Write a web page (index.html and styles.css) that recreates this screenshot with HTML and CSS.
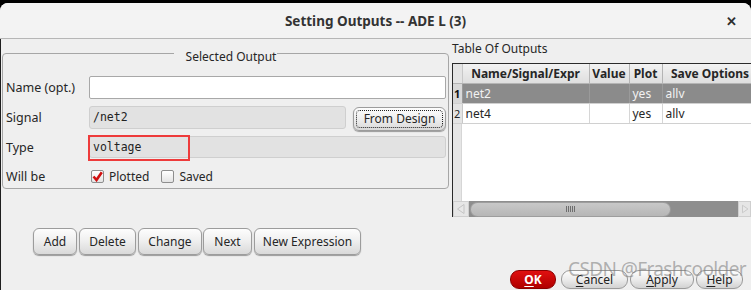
FILE: index.html
```html
<!DOCTYPE html>
<html>
<head>
<meta charset="utf-8">
<link rel="stylesheet" href="styles.css">
</head>
<body>
<div class="win">
  <div class="titlebar">
    <span class="title">Setting Outputs -- ADE L (3)</span>
    <span class="close">✕</span>
  </div>
  <div class="body">
    <div class="top">
      <fieldset class="group">
        <legend>Selected Output</legend>
        <div class="row r1"><span class="lbl">Name (opt.)</span><div class="input"></div></div>
        <div class="row r2"><span class="lbl">Signal</span><div class="ro sig">/net2</div><div class="btn fromdesign"><span class="focus">From Design</span></div></div>
        <div class="row r3"><span class="lbl">Type</span><div class="ro type">voltage<span class="hl"></span></div></div>
        <div class="row r4"><span class="lbl">Will be</span>
          <span class="cb checked"><svg width="11" height="11" viewBox="0 0 11 11"><path d="M1.5 5.5 L4.5 9 L9.8 1.2" fill="none" stroke="#d01010" stroke-width="2.6"/></svg></span><span class="cbl">Plotted</span>
          <span class="cb"></span><span class="cbl">Saved</span>
        </div>
      </fieldset>
      <div class="tablesec">
        <div class="tlabel">Table Of Outputs</div>
        <div class="tframe">
          <table class="tbl">
            <colgroup><col class="c0"><col class="c1"><col class="c2"><col class="c3"><col class="c4"></colgroup>
            <thead><tr><th class="rn"></th><th>Name/Signal/Expr</th><th>Value</th><th>Plot</th><th>Save Options</th></tr></thead>
            <tbody>
              <tr class="sel"><td class="rn b">1</td><td>net2</td><td></td><td>yes</td><td>allv</td></tr>
              <tr><td class="rn">2</td><td>net4</td><td></td><td>yes</td><td>allv</td></tr>
            </tbody>
          </table>
          <div class="filler"><div class="fgut"></div><div class="fwhite"></div></div>
          <div class="hscroll">
            <div class="arr"><svg width="12" height="12" viewBox="0 0 12 12"><path d="M9 1.5 L2.5 6 L9 10.5 Z" fill="#e8e8e8" stroke="#c4c4c4"/></svg></div>
            <div class="track"><div class="handle"><span class="grip"></span></div></div>
            <div class="arr r"><svg width="12" height="12" viewBox="0 0 12 12"><path d="M3 1.5 L9.5 6 L3 10.5 Z" fill="#e8e8e8" stroke="#c4c4c4"/></svg></div>
          </div>
        </div>
      </div>
    </div>
    <div class="actions">
      <div class="btn b-add">Add</div>
      <div class="btn b-del">Delete</div>
      <div class="btn b-chg">Change</div>
      <div class="btn b-next">Next</div>
      <div class="btn b-new">New Expression</div>
    </div>
    <div class="dlg">
      <div class="dbtn ok"><u>O</u>K</div>
      <div class="dbtn cancel"><u>C</u>ancel</div>
      <div class="dbtn apply"><u>A</u>pply</div>
      <div class="dbtn help"><u>H</u>elp</div>
      <div class="wm">CSDN @Frashcoolder</div>
    </div>
  </div>
</div>
</body>
</html>
```

FILE: styles.css
```css
* { box-sizing: border-box; }
html, body { margin: 0; padding: 0; }
body {
  background: #000;
  width: 751px;
  height: 290px;
  overflow: hidden;
  font-family: "Noto Sans", "Open Sans", sans-serif;
  font-size: 12px;
  color: #262626;
}
.win {
  margin-top: 3px;
  height: 287px;
  background: #efefef;
  border-radius: 8px 8px 0 0;
  overflow: hidden;
}
.titlebar {
  height: 36px;
  background: #f3f3f3;
  border-bottom: 1px solid #b6b6b6;
  display: flex;
  align-items: center;
  justify-content: center;
  position: relative;
}
.title {
  font-weight: 700;
  font-size: 13.5px;
  color: #333;
}
.close {
  position: absolute;
  right: 14px;
  top: 9px;
  font-size: 13px;
  font-weight: 700;
  color: #2e2e2e;
}
.body {
  border-left: 1px solid #1e1e1e;
  height: 251px;
  display: flex;
  flex-direction: column;
}
.top {
  display: flex;
  height: 178px;
}
.group {
  flex: none;
  margin: 2px 0 0 1px;
  padding: 0;
  width: 447px;
  height: 148px;
  border: 1px solid #a6a6a6;
  border-radius: 4px;
  min-width: 0;
}
.group legend {
  margin: 0 auto;
  padding: 8px 6px 0 7px;
  line-height: 16px;
  color: #262626;
  position: relative;
  left: 5px;
}
.row {
  display: flex;
  align-items: center;
  height: 30px;
  padding-left: 3px;
}
.r1 { margin-top: 7px; }
.r4 { height: 28px; }
.lbl {
  width: 83px;
  flex: none;
  font-size: 12.5px;
}
.input {
  width: 357px;
  height: 23px;
  background: #fff;
  border: 1px solid #a8a8a8;
  border-radius: 2px;
}
.ro {
  height: 23px;
  background: #e2e2e2;
  border: 1px solid #cfcfcf;
  border-radius: 3px;
  font-family: "DejaVu Sans Mono", monospace;
  font-size: 11.5px;
  line-height: 21px;
  padding-left: 3px;
  color: #222;
}
.sig { width: 257px; }
.type { width: 357px; height: 22px; line-height: 20px; position: relative; }
.hl {
  position: absolute;
  left: -2px;
  top: -2px;
  width: 102px;
  height: 26px;
  border: 2px solid #ee3b3b;
}
.btn {
  height: 27px;
  border: 1px solid #9c9c9c;
  border-radius: 6px;
  background: linear-gradient(#fdfdfd, #f0f0f0 45%, #d9d9d9);
  box-shadow: 0 1px 1px #9a9a9a;
  display: flex;
  align-items: center;
  justify-content: center;
  padding: 0;
  color: #262626;
  flex: none;
}
.fromdesign {
  margin-left: 7px;
  width: 93px;
  height: 24px;
  padding: 2px;
  margin-top: 3px;
}
.focus {
  border: 1px dotted #222;
  border-radius: 4px;
  width: 100%;
  height: 100%;
  display: flex;
  align-items: center;
  justify-content: center;
}
.cb {
  width: 13px;
  height: 13px;
  border: 1px solid #8e8e8e;
  border-radius: 2px;
  background: linear-gradient(#fff, #e4e4e4);
  margin-left: 2px;
  display: flex;
  align-items: center;
  justify-content: center;
  flex: none;
}
.cbl { margin-left: 5px; margin-right: 10px; }
.tablesec {
  flex: 1;
  min-width: 0;
  display: flex;
  flex-direction: column;
  padding-top: 2px;
}
.tlabel {
  padding-left: 2px;
  line-height: 16px;
  height: 16px;
  margin-left: 1px;
}
.tframe {
  margin-top: 6px;
  margin-left: 3px;
  flex: 1;
  overflow: hidden;
  border-left: 1px solid #2a2a2a;
  border-top: 1px solid #2a2a2a;
  display: flex;
  flex-direction: column;
  background: #fff;
}
.tbl {
  border-collapse: collapse;
  table-layout: fixed;
  width: 305px;
  flex: none;
}
.c0 { width: 9px; }
.c1 { width: 127px; }
.c2 { width: 40px; }
.c3 { width: 33px; }
.c4 { width: 96px; }
.tbl th {
  height: 19px;
  background: linear-gradient(#f2f2f2, #dedede);
  border-right: 1px solid #b4b4b4;
  border-bottom: 1px solid #b4b4b4;
  font-weight: 700;
  padding: 0;
  white-space: nowrap;
  overflow: hidden;
  color: #262626;
}
.tbl td {
  height: 20px;
  padding: 0 0 0 3px;
  border-right: 1px solid #d6d6d6;
  border-bottom: 1px solid #d0d0d0;
  white-space: nowrap;
  overflow: hidden;
}
.tbl td.rn, .tbl th.rn {
  padding: 0;
  background: #e4e4e4;
  border-right: 1px solid #c8c8c8;
  text-align: center;
  font-size: 11px;
}
.tbl td.rn.b { font-weight: 700; }
.tbl tr.sel td { background: #8b8b8b; color: #f2f2f2; border-right-color: #9a9a9a; }
.tbl tr.sel td.rn { background: #d8d8d8; color: #111; }
.filler { flex: 1; display: flex; }
.fgut { width: 9px; background: #e6e6e6; border-right: 1px solid #d6d6d6; }
.fwhite { flex: 1; background: #fff; }
.hscroll {
  height: 16px;
  display: flex;
  background: #8e8e8e;
}
.arr {
  width: 16px;
  flex: none;
  background: #e6e6e6;
  border: 1px solid #cfcfcf;
  display: flex;
  align-items: center;
  justify-content: center;
}
.arr.r { width: 13px; justify-content: flex-start; padding-left: 1px; }
.track {
  flex: 1;
  display: flex;
  align-items: center;
  padding-left: 1px;
}
.handle {
  width: 201px;
  height: 15px;
  border-radius: 8px;
  background: linear-gradient(#c8c8c8, #b6b6b6);
  border: 1px solid #9d9d9d;
  display: flex;
  align-items: center;
  justify-content: center;
}
.grip {
  width: 9px;
  height: 6px;
  background: repeating-linear-gradient(90deg, #6e6e6e 0 1px, transparent 1px 2px);
}
.actions {
  display: flex;
  gap: 2px;
  padding-left: 32px;
  margin-top: 11px;
}
.b-add { width: 44px; }
.b-del { width: 57px; }
.b-chg { width: 64px; }
.b-next { width: 49px; margin-left: -1px; }
.b-new { width: 107px; }
.dlg {
  position: relative;
  display: flex;
  justify-content: flex-end;
  gap: 2px;
  padding-right: 8px;
  margin-top: 15px;
}
.dbtn {
  height: 19px;
  border-radius: 9px;
  border: 1px solid #9a9a9a;
  background: linear-gradient(#fdfdfd, #ececec 50%, #d2d2d2);
  display: flex;
  align-items: center;
  justify-content: center;
  color: #222;
}
.dbtn u { text-underline-offset: 2px; }
.ok {
  width: 46px;
  margin-right: 3px;
  background: linear-gradient(#e01010, #b00000);
  border-color: #8a0000;
  color: #fff;
  font-weight: 700;
}
.cancel { width: 67px; }
.apply { width: 64px; }
.help { width: 47px; }
.wm {
  position: absolute;
  left: 567px;
  top: -14px;
  font-size: 19px;
  letter-spacing: -0.6px;
  color: rgba(120, 120, 120, 0.55);
  white-space: nowrap;
  font-family: "Noto Sans", sans-serif;
}
```
